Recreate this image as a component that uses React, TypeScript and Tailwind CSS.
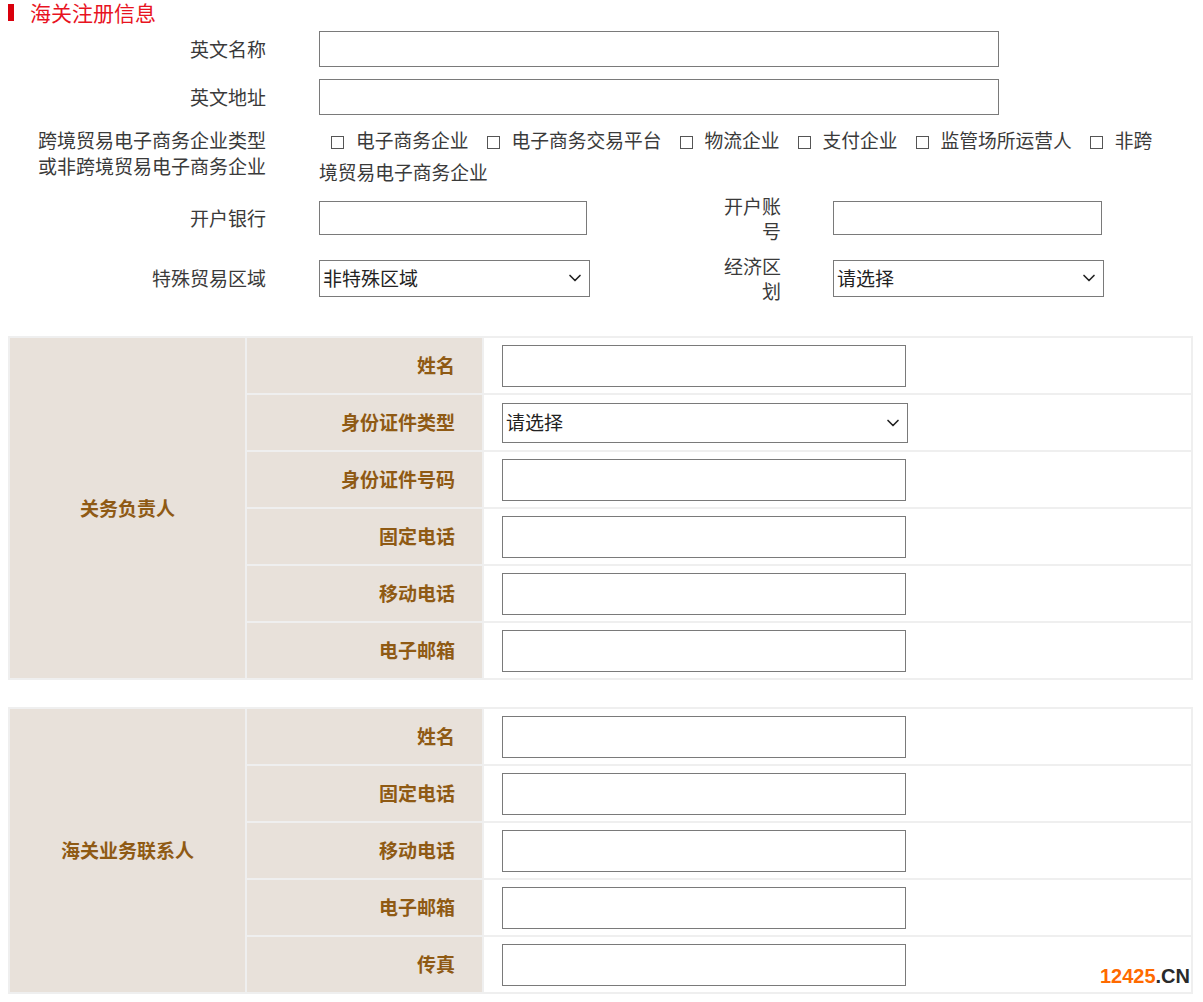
import { ChevronDown } from 'lucide-react'

const FONT = { fontFamily: '"Microsoft YaHei", "Noto Sans CJK SC", sans-serif' }

const BIZ_TYPES = ['电子商务企业', '电子商务交易平台', '物流企业', '支付企业', '监管场所运营人', '非跨境贸易电子商务企业']

function TextBox({ className = '' }: { className?: string }) {
  return <div className={`border border-[#7a7a7a] bg-white ${className}`} />
}

function SelectBox({ value, className = '' }: { value: string; className?: string }) {
  return (
    <div className={`flex items-center justify-between border border-[#7a7a7a] bg-white pl-[3px] pr-[4px] text-[#222] ${className}`}>
      <span>{value}</span>
      <ChevronDown className="h-[20px] w-[20px] text-[#222]" strokeWidth={2} />
    </div>
  )
}

function ContactTable({ title, rows }: { title: string; rows: { label: string; select?: boolean }[] }) {
  return (
    <div className="ml-[8px] grid w-[1185px] grid-cols-[235px_235px_1fr] gap-[2px] bg-[#efefef] p-[2px]">
      <div
        className="flex items-center justify-center bg-[#e8e1da] font-bold text-[#8f5a14]"
        style={{ gridRow: `span ${rows.length} / span ${rows.length}` }}
      >
        {title}
      </div>
      {rows.map((r, i) => (
        <div key={r.label} className="contents">
          <div
            className="flex h-[55px] items-center justify-end bg-[#e8e1da] pr-[27px] font-bold text-[#8f5a14]"
            style={{ gridRow: i + 1, gridColumn: 2 }}
          >
            {r.label}
          </div>
          <div className="flex items-center bg-white pl-[18px]" style={{ gridRow: i + 1, gridColumn: 3 }}>
            {r.select ? (
              <SelectBox value="请选择" className="h-[40px] w-[406px]" />
            ) : (
              <TextBox className="h-[42px] w-[404px]" />
            )}
          </div>
        </div>
      ))}
    </div>
  )
}

export default function App() {
  return (
    <div className="relative h-[1002px] w-[1203px] overflow-hidden bg-white text-[19px] text-[#3a3a3a]" style={FONT}>
      {/* header */}
      <div className="flex h-[24px] items-center">
        <span className="ml-[8px] h-[17px] w-[6px] bg-[#d9000d]" />
        <span className="ml-[16px] text-[21px] leading-[24px] text-[#e8131f]">海关注册信息</span>
      </div>

      {/* english name */}
      <div className="mt-[7px] flex items-center">
        <div className="w-[266px] text-right">英文名称</div>
        <TextBox className="ml-[53px] h-[36px] w-[680px]" />
      </div>

      <div className="mt-[12px] flex items-center">
        <div className="w-[266px] text-right">英文地址</div>
        <TextBox className="ml-[53px] h-[36px] w-[680px]" />
      </div>

      {/* business type */}
      <div className="mt-[9px] flex items-start">
        <div className="w-[266px] pt-[3px] text-right leading-[26px]">
          跨境贸易电子商务企业类型
          <br />
          或非跨境贸易电子商务企业
        </div>
        <div className="ml-[53px] w-[842px] text-[18.75px] leading-[32px]">
          {BIZ_TYPES.map((t, i) => (
            <span key={t}>
              <span
                className={`inline-block h-[13px] w-[13px] border border-[#555] bg-white align-[-1px] ${i === 0 ? 'ml-[12px]' : 'ml-[18px]'} mr-[12px]`}
              />
              {t}
            </span>
          ))}
        </div>
      </div>

      {/* bank */}
      <div className="mt-[5px] flex items-center">
        <div className="w-[266px] text-right">开户银行</div>
        <TextBox className="ml-[53px] h-[34px] w-[268px]" />
        <div className="ml-[134px] w-[60px] text-right leading-[25px]">开户账号</div>
        <TextBox className="ml-[52px] h-[34px] w-[269px]" />
      </div>

      <div className="mt-[10px] flex items-center">
        <div className="w-[266px] text-right">特殊贸易区域</div>
        <SelectBox value="非特殊区域" className="ml-[53px] h-[37px] w-[271px]" />
        <div className="ml-[131px] w-[60px] text-right leading-[25px]">经济区划</div>
        <SelectBox value="请选择" className="ml-[52px] h-[37px] w-[271px]" />
      </div>

      <div className="mt-[33px]">
        <ContactTable
          title="关务负责人"
          rows={[
            { label: '姓名' },
            { label: '身份证件类型', select: true },
            { label: '身份证件号码' },
            { label: '固定电话' },
            { label: '移动电话' },
            { label: '电子邮箱' },
          ]}
        />
      </div>

      <div className="mt-[27px]">
        <ContactTable
          title="海关业务联系人"
          rows={[
            { label: '姓名' },
            { label: '固定电话' },
            { label: '移动电话' },
            { label: '电子邮箱' },
            { label: '传真' },
          ]}
        />
      </div>

      {/* watermark */}
      <div
        className="absolute right-[13px] top-[966px] text-[20px] font-bold leading-none"
        style={{ fontFamily: '"Liberation Sans", Arial, sans-serif' }}
      >
        <span className="text-[#ff6a00]">12425</span>
        <span className="text-[#2a2a2a]">.CN</span>
      </div>
    </div>
  )
}
